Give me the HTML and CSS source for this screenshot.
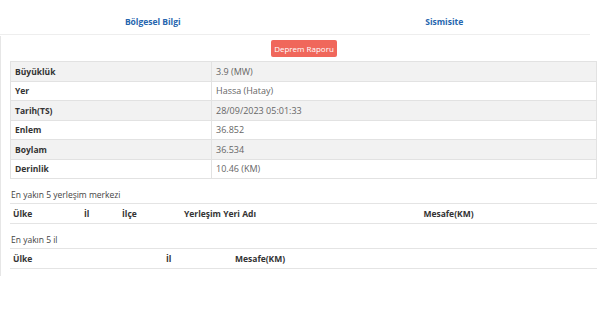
FILE: index.html
```html
<!DOCTYPE html>
<html lang="tr">
<head>
    <meta charset="UTF-8">
    <meta name="viewport" content="width=device-width, initial-scale=1.0">
    <title>Deprem Detay</title>
    <link rel="stylesheet" href="styles.css">
</head>
<body>
    <div class="side-edge"></div>
    <div class="page">
        <ul class="tabs">
            <li class="tab">Bölgesel Bilgi</li>
            <li class="tab">Sismisite</li>
        </ul>

        <div class="actions">
            <button class="report-button">Deprem Raporu</button>
        </div>

        <table class="info-table">
            <tr><th>Büyüklük</th><td>3.9 (MW)</td></tr>
            <tr><th>Yer</th><td>Hassa (Hatay)</td></tr>
            <tr><th>Tarih(TS)</th><td>28/09/2023 05:01:33</td></tr>
            <tr><th>Enlem</th><td>36.852</td></tr>
            <tr><th>Boylam</th><td>36.534</td></tr>
            <tr><th>Derinlik</th><td>10.46 (KM)</td></tr>
        </table>

        <div class="section-title">En yakın 5 yerleşim merkezi</div>
        <table class="list-table">
            <tr>
                <th class="col-ulke">Ülke</th>
                <th class="col-il">İl</th>
                <th class="col-ilce">İlçe</th>
                <th class="col-yer">Yerleşim Yeri Adı</th>
                <th class="col-mesafe">Mesafe(KM)</th>
            </tr>
        </table>

        <div class="section-title">En yakın 5 il</div>
        <table class="list-table">
            <tr>
                <th class="col-ulke2">Ülke</th>
                <th class="col-il2">İl</th>
                <th>Mesafe(KM)</th>
            </tr>
        </table>
    </div>
</body>
</html>
```

FILE: styles.css
```css
* {
    margin: 0;
    padding: 0;
    box-sizing: border-box;
}

body {
    background-color: #ffffff;
    font-family: "Open Sans", Arial, sans-serif;
    font-size: 8px;
    color: #333;
    width: 600px;
    height: 312px;
    overflow: hidden;
    position: relative;
}

/* bord gauche coupé */
.side-edge {
    position: absolute;
    left: 0;
    top: 36px;
    width: 2px;
    height: 240px;
    border-left: 1px solid #e6e6e6;
}

.page {
    padding: 9px 3px 0 10px;
}

.tabs {
    list-style: none;
    display: flex;
    margin: 0 7px 0 -10px;
    padding-left: 7px;
    border-bottom: 1px solid #eeeeee;
}

.tab {
    flex: 1;
    text-align: center;
    color: #2565ae;
    font-weight: bold;
    font-size: 8.5px;
    line-height: 25px;
}

.actions {
    display: flex;
    justify-content: center;
    padding: 5px 0 4px 1px;
}

.report-button {
    font-family: "Open Sans", Arial, sans-serif;
    background-color: #f0675b;
    color: #ffffff;
    border: none;
    border-radius: 2px;
    font-size: 8px;
    height: 17px;
    width: 66px;
    white-space: nowrap;
}

.info-table {
    width: 587px;
    border-collapse: collapse;
    border: 1px solid #e2e2e2;
}

.info-table tr:nth-child(odd) {
    background-color: #f2f2f2;
}

.info-table th,
.info-table td {
    height: 19.5px;
    padding: 0 4px;
    text-align: left;
    border-top: 1px solid #e2e2e2;
    font-size: 8.5px;
}

.info-table th {
    width: 201px;
    color: #333;
    border-right: 1px solid #e2e2e2;
}

.info-table td {
    color: #666;
    font-size: 9px;
}

.section-title {
    font-size: 8.5px;
    color: #444;
    padding: 10px 1px 3px;
}

.list-table {
    width: 587px;
    border-collapse: collapse;
}

.list-table th {
    height: 20px;
    padding: 0 3px;
    text-align: left;
    font-size: 8.5px;
    color: #333;
    border-top: 1px solid #e4e4e4;
    border-bottom: 1px solid #e4e4e4;
}

.col-ulke { width: 71px; }
.col-il { width: 38px; }
.col-ilce { width: 62px; }
.col-yer { width: 119px; }
.list-table th.col-mesafe { text-align: center; }

.col-ulke2 { width: 153px; }
.col-il2 { width: 69px; }
```
